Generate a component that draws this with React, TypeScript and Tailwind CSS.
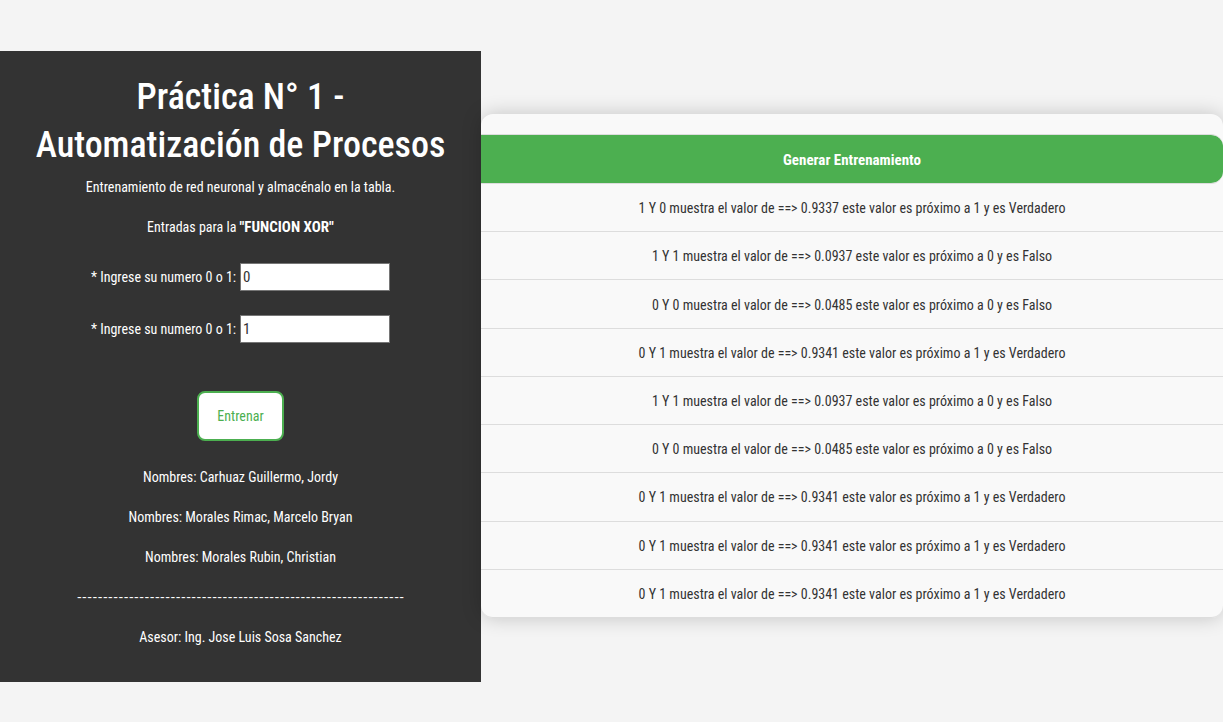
import { useState } from "react";

const results = [
  "1 Y 0 muestra el valor de ==> 0.9337 este valor es próximo a 1 y es Verdadero",
  "1 Y 1 muestra el valor de ==> 0.0937 este valor es próximo a 0 y es Falso",
  "0 Y 0 muestra el valor de ==> 0.0485 este valor es próximo a 0 y es Falso",
  "0 Y 1 muestra el valor de ==> 0.9341 este valor es próximo a 1 y es Verdadero",
  "1 Y 1 muestra el valor de ==> 0.0937 este valor es próximo a 0 y es Falso",
  "0 Y 0 muestra el valor de ==> 0.0485 este valor es próximo a 0 y es Falso",
  "0 Y 1 muestra el valor de ==> 0.9341 este valor es próximo a 1 y es Verdadero",
  "0 Y 1 muestra el valor de ==> 0.9341 este valor es próximo a 1 y es Verdadero",
  "0 Y 1 muestra el valor de ==> 0.9341 este valor es próximo a 1 y es Verdadero",
];

type NumberFieldProps = {
  id: string;
  value: string;
  onChange: (value: string) => void;
};

function NumberField({ id, value, onChange }: NumberFieldProps) {
  return (
    <div className="flex items-center justify-center gap-1">
      <label htmlFor={id}>* Ingrese su numero 0 o 1:</label>
      <input
        id={id}
        type="text"
        value={value}
        onChange={(event) => onChange(event.target.value)}
        className="h-7 w-[150px] border border-[#767676] bg-white px-[2px] text-[15px] text-[#333333]"
      />
    </div>
  );
}

export default function App() {
  const [first, setFirst] = useState("0");
  const [second, setSecond] = useState("1");

  return (
    <main className="grid min-h-screen grid-cols-[481fr_742fr] items-center bg-[#f4f4f4] pt-[10px] font-['Roboto_Condensed',Roboto,sans-serif] text-[14px] leading-6 text-[#333333]">
      <section className="bg-[#333333] px-6 pt-[22px] pb-[33px] text-center text-white">
        <h1 className="text-[36px] leading-[48px] font-medium">
          Práctica N° 1 -<br />
          Automatización de Procesos
        </h1>
        <p className="mt-[6px]">Entrenamiento de red neuronal y almacénalo en la tabla.</p>
        <p className="mt-4">
          Entradas para la <strong className="text-[15px] font-bold">"FUNCION XOR"</strong>
        </p>
        <form onSubmit={(event) => event.preventDefault()}>
          <div className="mt-6 flex flex-col gap-6">
            <NumberField id="first-input" value={first} onChange={setFirst} />
            <NumberField id="second-input" value={second} onChange={setSecond} />
          </div>
          <button
            type="submit"
            className="mt-12 h-[50px] rounded-lg border-2 border-[#4caf50] bg-white px-[18px] text-[#4caf50]"
          >
            Entrenar
          </button>
        </form>
        <div className="mt-6 flex flex-col gap-4">
          <p>Nombres: Carhuaz Guillermo, Jordy</p>
          <p>Nombres: Morales Rimac, Marcelo Bryan</p>
          <p>Nombres: Morales Rubin, Christian</p>
          <p className="font-[Lato,sans-serif]">
            ---------------------------------------------------------------
          </p>
          <p>Asesor: Ing. Jose Luis Sosa Sanchez</p>
        </div>
      </section>

      <section className="rounded-xl bg-[#f9f9f9] pt-5 shadow-[0_0_20px_rgba(0,0,0,0.2)]">
        <table className="h-[484px] w-full border-separate border-spacing-0 text-center">
          <thead>
            <tr>
              <th className="rounded-r-xl border-y border-[#dddddd] bg-[#4caf50] bg-clip-padding pt-[13px] pb-[11px] text-[15px] leading-6 font-bold text-white">
                Generar Entrenamiento
              </th>
            </tr>
          </thead>
          <tbody>
            {results.map((result, index) => (
              <tr key={index} className="group">
                <td className="border-b border-[#dddddd] pt-[13px] pb-[11px] leading-[23px] group-last:rounded-b-xl">
                  {result}
                </td>
              </tr>
            ))}
          </tbody>
        </table>
      </section>
    </main>
  );
}
